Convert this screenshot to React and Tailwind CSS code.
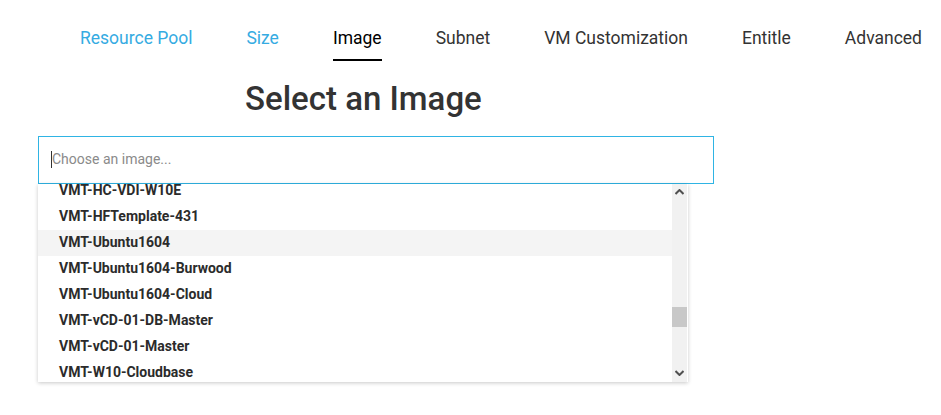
import React from "react";

const tabs = [
  { label: "Resource Pool", state: "done" },
  { label: "Size", state: "done" },
  { label: "Image", state: "active" },
  { label: "Subnet" },
  { label: "VM Customization" },
  { label: "Entitle" },
  { label: "Advanced" },
];

const images = [
  "VMT-HC-VDI-W10E",
  "VMT-HFTemplate-431",
  "VMT-Ubuntu1604",
  "VMT-Ubuntu1604-Burwood",
  "VMT-Ubuntu1604-Cloud",
  "VMT-vCD-01-DB-Master",
  "VMT-vCD-01-Master",
  "VMT-W10-Cloudbase",
];

const Arrow = ({ down }) => (
  <svg width="9" height="6" viewBox="0 0 9 6" className={down ? "rotate-180" : ""}>
    <path d="M0.5 5 L4.5 1 L8.5 5" fill="none" stroke="#505050" strokeWidth="2" />
  </svg>
);

export default function App() {
  return (
    <div className="w-[941px] h-[415px] bg-white overflow-hidden font-['Roboto',sans-serif]">
      {/* Wizard steps */}
      <nav className="flex gap-[54px] pl-[80px] pt-[26px] text-[17.5px] leading-[24px]">
        {tabs.map((t) => (
          <div key={t.label} className="flex flex-col">
            <span
              className={
                t.state === "done"
                  ? "text-[#35abe2]"
                  : t.state === "active"
                  ? "text-black"
                  : "text-[#333]"
              }
            >
              {t.label}
            </span>
            <div className={t.state === "active" ? "mt-[9px] h-[1.5px] bg-black" : "mt-[9px] h-[1.5px]"} />
          </div>
        ))}
      </nav>

      {/* Heading */}
      <h1 className="pl-[245px] mt-[18px] text-[33px] leading-[40px] font-medium text-[#333]">
        Select an Image
      </h1>

      {/* Combobox */}
      <div className="ml-[38px] mt-[17px] w-[676px]">
        <div className="h-[48px] border border-[#2fb4e4] flex items-center pl-[12px]">
          <span className="w-px h-[17px] bg-[#333]" />
          <span className="text-[14px] text-[#8a8a8a]">Choose an image...</span>
        </div>
        <div className="relative w-[650px] h-[198px] bg-white shadow-[0_1px_4px_rgba(0,0,0,0.22)] overflow-hidden">
          <ul className="-mt-[6px] mr-[15px]">
            {images.map((name, i) => (
              <li
                key={name}
                className={
                  "h-[26px] flex items-center pl-[21px] text-[14px] font-bold text-[#2b2b2b] " +
                  (i === 2 ? "bg-[#f4f4f4]" : "")
                }
              >
                {name}
              </li>
            ))}
          </ul>
          {/* scrollbar */}
          <div className="absolute top-0 right-px w-[15px] h-full bg-[#f1f1f1] flex flex-col items-center">
            <div className="h-[17px] flex items-center justify-center">
              <Arrow />
            </div>
            <div className="flex-1 w-full">
              <div className="mt-[106px] h-[20px] w-full bg-[#c8c8c8]" />
            </div>
            <div className="h-[17px] flex items-center justify-center">
              <Arrow down />
            </div>
          </div>
        </div>
      </div>
    </div>
  );
}
